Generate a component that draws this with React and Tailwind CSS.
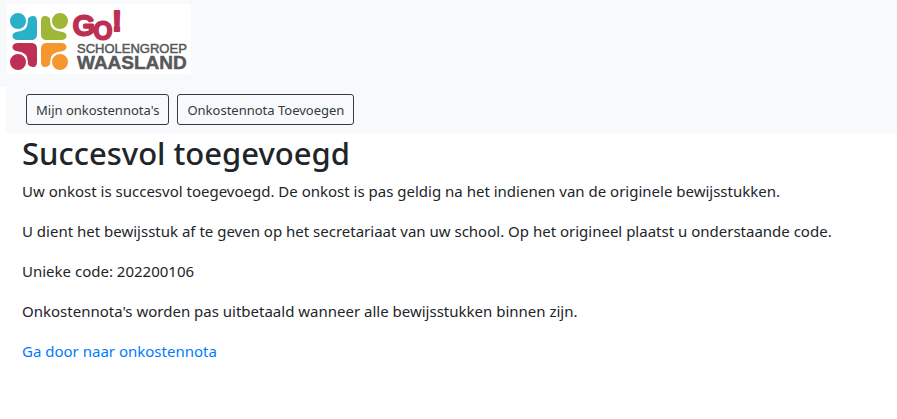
import { useState } from "react";

const navItems = ["Mijn onkostennota's", "Onkostennota Toevoegen"];

function Logo() {
  return (
    <svg width="184" height="70" viewBox="0 0 184 70" role="img" aria-label="GO! Scholengroep Waasland" className="block bg-white">
      {/* figuren */}
      <g fill="#2bb0c9">
        <path d="M26 12 C29 12 30 14 30 18 V30 C30 34 28 36 24 36 H11 C4 36 4 29 9 28 C16 27 21 25 20 19 C20 15 22 12 26 12 Z" />
        <circle cx="11" cy="17" r="9" stroke="#fff" strokeWidth="2" />
      </g>
      <g fill="#9fb637">
        <path d="M38 12 C35 12 34 14 34 18 V30 C34 34 36 36 40 36 H54 C61 36 61 29 56 28 C49 27 43 25 44 19 C44 15 42 12 38 12 Z" />
        <circle cx="53" cy="17" r="9" stroke="#fff" strokeWidth="2" />
      </g>
      <g fill="#be2f54">
        <path d="M26 63 C29 63 30 61 30 57 V45 C30 41 28 39 24 39 H11 C4 39 4 46 9 47 C16 48 21 50 20 56 C20 60 22 63 26 63 Z" />
        <circle cx="11" cy="58" r="9" stroke="#fff" strokeWidth="2" />
      </g>
      <g fill="#f6962e">
        <path d="M38 63 C35 63 34 61 34 57 V45 C34 41 36 39 40 39 H54 C61 39 61 46 56 47 C49 48 43 50 44 56 C44 60 42 63 38 63 Z" />
        <circle cx="53" cy="58" r="9" stroke="#fff" strokeWidth="2" />
      </g>
      <g fill="#be2f54" stroke="#be2f54" strokeLinejoin="round" className="font-['Liberation_Sans',sans-serif]">
        <text x="66" y="31" fontSize="28" strokeWidth="3">G</text>
        <text x="87" y="35" fontSize="23" strokeWidth="3">O</text>
        <text x="105" y="27" fontSize="30" strokeWidth="2" className="font-bold">!</text>
      </g>
      <g fill="#58585a" className="font-['Liberation_Sans',sans-serif]">
        <text x="70" y="49" fontSize="13" stroke="#58585a" strokeWidth="0.5">SCHOLENGROEP</text>
        <text x="70" y="65" fontSize="19" stroke="#58585a" strokeWidth="0.5" className="font-bold">WAASLAND</text>
      </g>
    </svg>
  );
}

export default function App() {
  const [active, setActive] = useState(null);

  return (
    <div className="min-h-screen bg-white font-['Noto_Sans','Open_Sans',sans-serif] text-[15px] leading-6 text-[#212529]">
      <header>
        <div className="bg-[#f8f9fa] px-[7px] pt-1 pb-[13px]">
          <Logo />
        </div>
        <nav className="ml-1.5 flex gap-2 bg-[#f8f9fa] px-5 pt-[7px] pb-2">
          {navItems.map((item) => (
            <button
              key={item}
              type="button"
              aria-pressed={active === item}
              onClick={() => setActive(item)}
              className="rounded-[3px] border border-[#343a40] px-[9px] pt-[5px] pb-[3px] text-[13px] leading-[21px] text-[#343a40]"
            >
              {item}
            </button>
          ))}
        </nav>
      </header>

      <main className="px-[22px]">
        <h1 className="mb-1.5 text-[31px] leading-10 font-medium">Succesvol toegevoegd</h1>
        <div className="space-y-4">
          <p>Uw onkost is succesvol toegevoegd. De onkost is pas geldig na het indienen van de originele bewijsstukken.</p>
          <p>U dient het bewijsstuk af te geven op het secretariaat van uw school. Op het origineel plaatst u onderstaande code.</p>
          <p>Unieke code: 202200106</p>
          <p>Onkostennota's worden pas uitbetaald wanneer alle bewijsstukken binnen zijn.</p>
          <p>
            <a href="#onkostennota" className="text-[#007bff]">Ga door naar onkostennota</a>
          </p>
        </div>
      </main>
    </div>
  );
}
